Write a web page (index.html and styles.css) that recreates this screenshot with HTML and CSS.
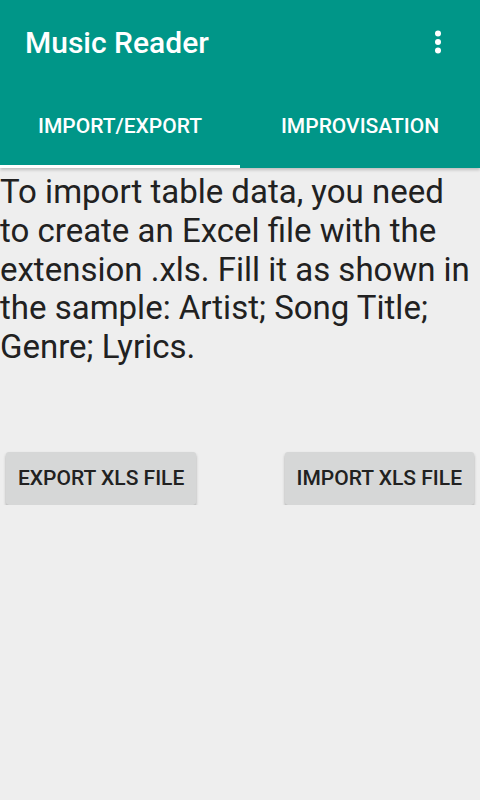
FILE: index.html
```html
<!DOCTYPE html>
<html lang="en">
<head>
    <meta charset="UTF-8">
    <meta name="viewport" content="width=device-width, initial-scale=1.0">
    <title>Music Reader</title>
    <link rel="stylesheet" href="styles.css">
</head>
<body>
    <div class="appbar">
        <div class="toolbar">
            <div class="app-title">Music Reader</div>
            <svg class="menu" width="8" height="24" viewBox="0 0 8 24">
                <circle cx="4" cy="3.5" r="3" fill="#fff"/>
                <circle cx="4" cy="12" r="3" fill="#fff"/>
                <circle cx="4" cy="20.5" r="3" fill="#fff"/>
            </svg>
        </div>
        <div class="tabs">
            <div class="tab active">IMPORT/EXPORT</div>
            <div class="tab">IMPROVISATION</div>
        </div>
    </div>

    <div class="content">
        <p class="info">To import table data, you need to create an Excel file with the extension .xls. Fill it as shown in the sample: Artist; Song Title; Genre; Lyrics.</p>

        <div class="actions">
            <button class="btn">EXPORT XLS FILE</button>
            <button class="btn">IMPORT XLS FILE</button>
        </div>
    </div>
</body>
</html>
```

FILE: styles.css
```css
body { margin: 0; background-color: #eeeeee; font-family: Roboto, "Noto Sans", Arial, sans-serif; }
.appbar { background-color: #009688; color: #fff; box-shadow: 0 2px 3px rgba(0,0,0,0.2); }
.toolbar { height: 84px; display: flex; align-items: center; justify-content: space-between; padding: 0 38px 0 25px; }
.app-title { font-size: 30px; font-weight: 500; }
.menu { display: block; }
.tabs { display: flex; height: 84px; }
.tab { flex: 1; display: flex; align-items: center; justify-content: center; font-size: 21px; font-weight: 500; box-sizing: border-box; border-bottom: 3px solid transparent; padding-top: 3px; }
.tab.active { border-bottom-color: #fff; }
.info { margin: 0; padding: 5px 8px 0 0; font-size: 33px; line-height: 38.75px; color: #212121; }
.actions { display: flex; justify-content: space-between; padding: 85px 6px 0 6px; }
.btn { font-family: inherit; font-size: 21px; font-weight: 500; color: #212121; background-color: #d6d7d7; border: none; border-radius: 3px; height: 53px; padding: 0 12px; box-shadow: 0 2px 3px rgba(0,0,0,0.3); }
```
